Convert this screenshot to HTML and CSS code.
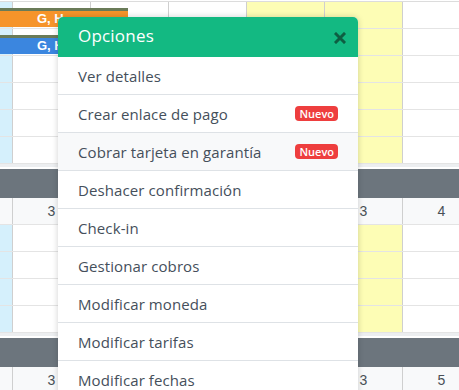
FILE: index.html
```html
<!DOCTYPE html>
<html lang="es">
<head>
<meta charset="utf-8">
<title>Opciones</title>
<link rel="stylesheet" href="styles.css">
</head>
<body>
<div class="planner">
  <section class="block">
    <div class="row"><div class="c first"></div><div class="c"></div><div class="c"></div><div class="c"></div><div class="c yel"></div><div class="c yel"></div><div class="c"></div></div>
    <div class="row"><div class="c first"></div><div class="c"></div><div class="c"></div><div class="c"></div><div class="c yel"></div><div class="c yel"></div><div class="c"></div></div>
    <div class="row"><div class="c first"></div><div class="c"></div><div class="c"></div><div class="c"></div><div class="c yel"></div><div class="c yel"></div><div class="c"></div></div>
    <div class="row"><div class="c first"></div><div class="c"></div><div class="c"></div><div class="c"></div><div class="c yel"></div><div class="c yel"></div><div class="c"></div></div>
    <div class="row"><div class="c first"></div><div class="c"></div><div class="c"></div><div class="c"></div><div class="c yel"></div><div class="c yel"></div><div class="c"></div></div>
    <div class="row"><div class="c first"></div><div class="c"></div><div class="c"></div><div class="c"></div><div class="c yel"></div><div class="c yel"></div><div class="c"></div></div>
    <div class="bar bar-orange"><span class="bar-text">G, H</span></div>
    <div class="bar bar-blue"><span class="bar-text">G, H</span></div>
  </section>

  <section class="block">
    <div class="head"></div>
    <div class="row nums"><div class="c first"></div><div class="c">3</div><div class="c"></div><div class="c"></div><div class="c"></div><div class="c">3</div><div class="c">4</div></div>
    <div class="row"><div class="c first"></div><div class="c"></div><div class="c"></div><div class="c"></div><div class="c yel"></div><div class="c yel"></div><div class="c"></div></div>
    <div class="row"><div class="c first"></div><div class="c"></div><div class="c"></div><div class="c"></div><div class="c yel"></div><div class="c yel"></div><div class="c"></div></div>
    <div class="row"><div class="c first"></div><div class="c"></div><div class="c"></div><div class="c"></div><div class="c yel"></div><div class="c yel"></div><div class="c"></div></div>
    <div class="row"><div class="c first"></div><div class="c"></div><div class="c"></div><div class="c"></div><div class="c yel"></div><div class="c yel"></div><div class="c"></div></div>
  </section>

  <section class="block">
    <div class="head"></div>
    <div class="row nums"><div class="c first"></div><div class="c">3</div><div class="c"></div><div class="c"></div><div class="c"></div><div class="c">3</div><div class="c">5</div></div>
  </section>

  <div class="menu">
    <div class="menu-head">
      <span class="menu-title">Opciones</span>
      <svg class="close" viewBox="0 0 12 12" width="12" height="12"><path d="M2 2 L10 10 M10 2 L2 10" stroke="#0e5e42" stroke-width="3" stroke-linecap="square"/></svg>
    </div>
    <ul class="menu-list">
      <li class="item">Ver detalles</li>
      <li class="item">Crear enlace de pago <span class="badge">Nuevo</span></li>
      <li class="item hover">Cobrar tarjeta en garantía <span class="badge">Nuevo</span></li>
      <li class="item">Deshacer confirmación</li>
      <li class="item">Check-in</li>
      <li class="item">Gestionar cobros</li>
      <li class="item">Modificar moneda</li>
      <li class="item">Modificar tarifas</li>
      <li class="item">Modificar fechas</li>
    </ul>
  </div>
</div>
</body>
</html>
```

FILE: styles.css
```css
html, body {
  margin: 0;
  padding: 0;
  background: #fff;
  overflow: hidden;
}
body {
  width: 459px;
  height: 390px;
  font-family: "Open Sans", "Liberation Sans", sans-serif;
}
.planner {
  position: relative;
  width: 459px;
  height: 390px;
  overflow: hidden;
  padding-top: 1px;
  box-sizing: border-box;
}
.block {
  position: relative;
  border-top: 1px solid #dcdcdc;
  box-shadow: 0 3px 0 #eceef0;
  margin-bottom: 5px;
}
.block + .block {
  border-top: none;
}
.row {
  display: flex;
  height: 26px;
  border-bottom: 1px solid #e4e4e4;
}
.c {
  flex: 0 0 77px;
  border-right: 1px solid #cfcfcf;
  background: #fff;
}
.c.first {
  flex: 0 0 12px;
  background: #d5f0fc;
}
.c.yel {
  background: #fdfdb5;
}
.nums .c {
  background: #f8f9fa;
  font-family: "Liberation Sans", Arial, sans-serif;
  font-size: 14px;
  color: #495057;
  text-align: center;
  line-height: 26px;
}
.nums .c.first {
  background: #f8f9fa;
}
.head {
  height: 29px;
  background: #6c757d;
}
.bar {
  position: absolute;
  left: 0;
  width: 128px;
  height: 16px;
  border-top: 3px solid #6a7b58;
  color: #fff;
  font-family: "Liberation Sans", Arial, sans-serif;
  font-weight: bold;
  font-size: 13px;
  line-height: 16px;
  box-sizing: content-box;
}
.bar-text {
  display: block;
  padding-left: 37px;
}
.bar-orange {
  top: 6px;
  background: #f6942a;
}
.bar-blue {
  top: 33px;
  background: #3b86df;
}
.menu {
  position: absolute;
  left: 58px;
  top: 17px;
  width: 300px;
  background: #fff;
  border-radius: 5px 5px 0 0;
  box-shadow: 0 0 6px rgba(0, 0, 0, 0.18);
}
.menu-head {
  display: flex;
  align-items: center;
  justify-content: space-between;
  height: 40px;
  padding: 0 12px 0 20px;
  background: #13b982;
  border-radius: 5px 5px 0 0;
}
.menu-title {
  color: #fff;
  font-size: 17px;
  font-weight: 500;
  letter-spacing: 0.2px;
  margin-bottom: 4px;
}
.close {
  margin-top: 1px;
}
.menu-list {
  list-style: none;
  margin: 0;
  padding: 0;
}
.item {
  display: flex;
  align-items: center;
  justify-content: space-between;
  height: 37px;
  padding: 0 20px;
  border-bottom: 1px solid #dee2e6;
  color: #454f5b;
  font-size: 15px;
  letter-spacing: 0.1px;
}
.item.hover {
  background: #f8f9fa;
}
.badge {
  background: #ee3e3e;
  color: #fff;
  font-size: 11px;
  font-weight: 600;
  line-height: 15px;
  padding: 0 4px;
  border-radius: 4px;
  letter-spacing: 0;
}
```
